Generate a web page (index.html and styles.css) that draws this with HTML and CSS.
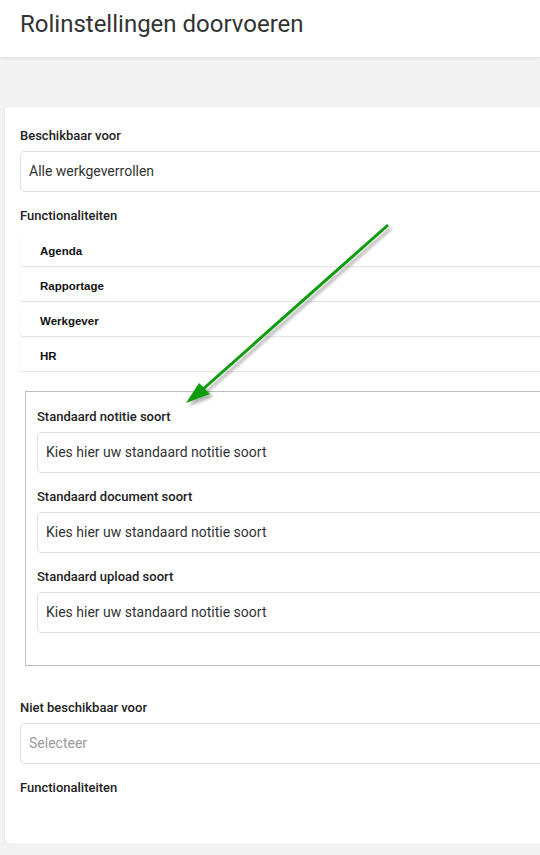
FILE: index.html
```html
<!DOCTYPE html>
<html>

<head>
  <title>Rolinstellingen doorvoeren</title>
  <link rel="stylesheet" href="styles.css">
</head>

<body>
  <div class="topbar">
    <div class="page-title">Rolinstellingen doorvoeren</div>
  </div>

  <div class="card">
    <div class="label">Beschikbaar voor</div>
    <div class="field">Alle werkgeverrollen</div>

    <div class="label gap">Functionaliteiten</div>
    <div class="func-list">
      <div class="func-item">Agenda</div>
      <div class="func-item">Rapportage</div>
      <div class="func-item">Werkgever</div>
      <div class="func-item">HR</div>
    </div>

    <div class="defaults">
      <div class="label">Standaard notitie soort</div>
      <div class="field">Kies hier uw standaard notitie soort</div>
      <div class="label gap">Standaard document soort</div>
      <div class="field">Kies hier uw standaard notitie soort</div>
      <div class="label gap">Standaard upload soort</div>
      <div class="field">Kies hier uw standaard notitie soort</div>
    </div>

    <div class="label gap-big">Niet beschikbaar voor</div>
    <div class="field placeholder">Selecteer</div>

    <div class="label gap">Functionaliteiten</div>
  </div>

  <!-- annotation arrow -->
  <svg class="arrow" width="540" height="855" viewBox="0 0 540 855">
    <defs>
      <filter id="shade" x="-20%" y="-20%" width="140%" height="140%">
        <feDropShadow dx="3" dy="3" stdDeviation="1.5" flood-color="#000" flood-opacity="0.3" />
      </filter>
    </defs>
    <g filter="url(#shade)">
      <line x1="388" y1="225" x2="202" y2="390" stroke="#0b9c0b" stroke-width="3" />
      <polygon points="186,403 199,383 210,394" fill="#0b9c0b" />
    </g>
  </svg>
</body>

</html>
```

FILE: styles.css
```css
* {
  box-sizing: border-box;
}

body {
  margin: 0;
  background: #f3f3f3;
  font-family: Roboto, "Liberation Sans", sans-serif;
  color: #333;
  overflow: hidden;
}

.topbar {
  height: 57px;
  background: white;
  padding: 10px 20px 0;
  box-shadow: 0 1px 4px rgba(0, 0, 0, .1);
  position: relative;
}

.page-title {
  font-size: 24px;
  line-height: 28px;
  color: #333;
}

.card {
  margin: 50px -20px 0 5px;
  background: white;
  border-radius: 4px;
  padding: 20px 0 40px 15px;
  box-shadow: 0 1px 3px rgba(0, 0, 0, .12);
}

.label {
  font-size: 13px;
  font-weight: 500;
  line-height: 18px;
  color: #222;
  margin-bottom: 6px;
}

.label.gap {
  margin-top: 15px;
}

.label.gap-big {
  margin-top: 33px;
}

.field {
  height: 41px;
  border: 1px solid #e2e2e2;
  border-radius: 4px;
  padding-left: 8px;
  font-size: 14px;
  line-height: 39px;
  color: #333;
}

.field.placeholder {
  color: #9a9a9a;
}

.func-list {
  margin-top: 11px;
  display: flex;
  flex-direction: column;
  gap: 5px;
}

.func-item {
  height: 30px;
  padding-left: 20px;
  line-height: 30px;
  font-family: "Liberation Sans", Arial, sans-serif;
  font-size: 11.5px;
  font-weight: bold;
  color: #111;
  background: white;
  border-radius: 3px;
  box-shadow: 0 1px 2px rgba(0, 0, 0, .13);
}

.defaults {
  margin: 20px 0 0 5px;
  border: 1px solid #bdbdbd;
  padding: 16px 0 32px 11px;
}

.arrow {
  position: absolute;
  top: 0;
  left: 0;
  pointer-events: none;
}
```
